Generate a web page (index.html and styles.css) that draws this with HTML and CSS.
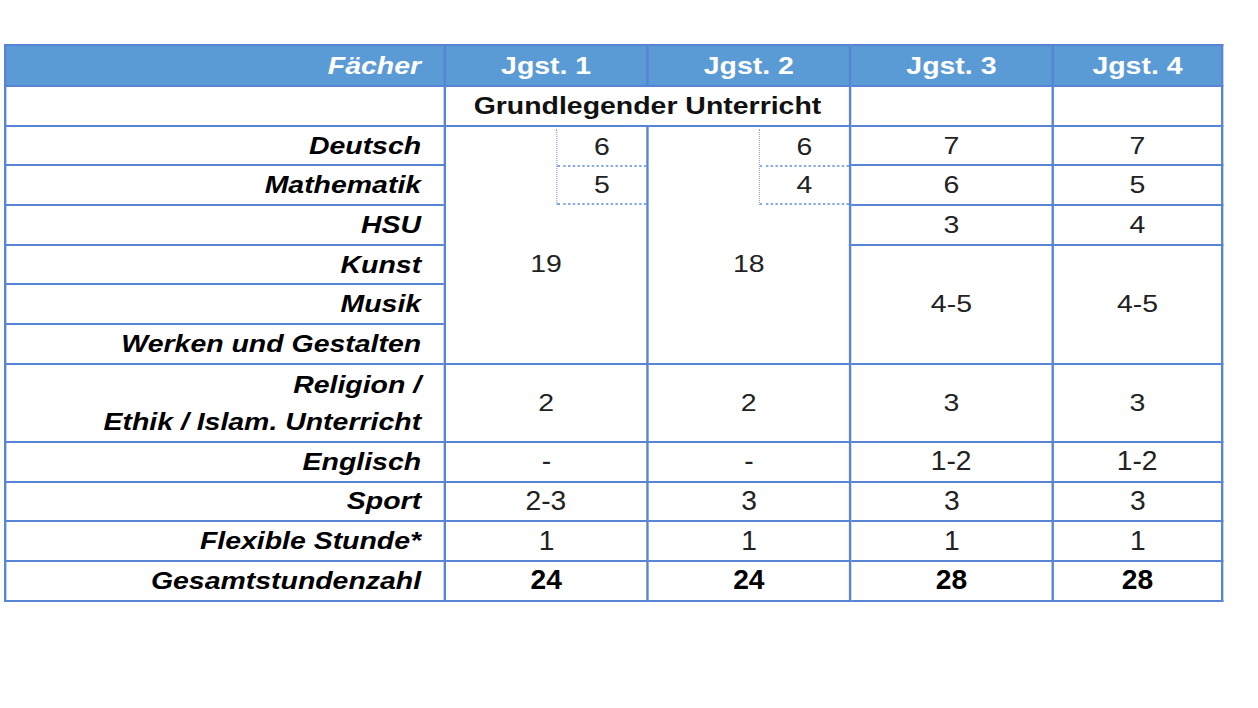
FILE: index.html
```html
<!DOCTYPE html>
<html lang="de">
<head>
<meta charset="utf-8">
<title>Stundentafel Grundschule</title>
<link rel="stylesheet" href="styles.css">
</head>
<body>
<div class="sheet">
<table class="plan">
  <colgroup>
    <col class="c-subj"><col class="c-y"><col class="c-y"><col class="c-y"><col class="c-y4">
  </colgroup>
  <thead>
    <tr class="head">
      <th class="subj">Fächer</th>
      <th>Jgst. 1</th>
      <th>Jgst. 2</th>
      <th>Jgst. 3</th>
      <th>Jgst. 4</th>
    </tr>
  </thead>
  <tbody>
    <tr>
      <td class="subj"></td>
      <td colspan="2" class="group">Grundlegender Unterricht</td>
      <td></td>
      <td></td>
    </tr>
    <tr>
      <td class="subj">Deutsch</td>
      <td rowspan="6" class="block">
        <div class="split">
          <div class="split-row">6</div>
          <div class="split-row">5</div>
        </div>
        <div class="big">19</div>
      </td>
      <td rowspan="6" class="block">
        <div class="split">
          <div class="split-row">6</div>
          <div class="split-row">4</div>
        </div>
        <div class="big">18</div>
      </td>
      <td class="num">7</td>
      <td class="num">7</td>
    </tr>
    <tr>
      <td class="subj">Mathematik</td>
      <td class="num">6</td>
      <td class="num">5</td>
    </tr>
    <tr>
      <td class="subj">HSU</td>
      <td class="num">3</td>
      <td class="num">4</td>
    </tr>
    <tr>
      <td class="subj">Kunst</td>
      <td rowspan="3" class="num">4-5</td>
      <td rowspan="3" class="num">4-5</td>
    </tr>
    <tr>
      <td class="subj">Musik</td>
    </tr>
    <tr>
      <td class="subj">Werken und Gestalten</td>
    </tr>
    <tr class="tall">
      <td class="subj two">Religion /<br>Ethik / Islam. Unterricht</td>
      <td class="num">2</td>
      <td class="num">2</td>
      <td class="num">3</td>
      <td class="num">3</td>
    </tr>
    <tr>
      <td class="subj">Englisch</td>
      <td class="num"><span class="nw">-</span></td>
      <td class="num"><span class="nw">-</span></td>
      <td class="num"><span class="nw">1-2</span></td>
      <td class="num"><span class="nw">1-2</span></td>
    </tr>
    <tr>
      <td class="subj">Sport</td>
      <td class="num"><span class="nw">2-3</span></td>
      <td class="num"><span class="nw">3</span></td>
      <td class="num"><span class="nw">3</span></td>
      <td class="num"><span class="nw">3</span></td>
    </tr>
    <tr>
      <td class="subj">Flexible Stunde*</td>
      <td class="num"><span class="nw">1</span></td>
      <td class="num"><span class="nw">1</span></td>
      <td class="num"><span class="nw">1</span></td>
      <td class="num"><span class="nw">1</span></td>
    </tr>
    <tr>
      <td class="subj">Gesamtstundenzahl</td>
      <td class="num total"><span class="nw">24</span></td>
      <td class="num total"><span class="nw">24</span></td>
      <td class="num total"><span class="nw">28</span></td>
      <td class="num total"><span class="nw">28</span></td>
    </tr>
  </tbody>
</table>
</div>
</body>
</html>
```
FILE: styles.css
```css
html, body {
  margin: 0;
  padding: 0;
  background: #ffffff;
}

body {
  font-family: "Liberation Sans", Arial, sans-serif;
  color: #111;
}

/* The sheet is shown horizontally stretched, like the original export */
.sheet {
  width: 1029px;
  margin: 44px 0 0 4px;
  transform: scaleX(1.185);
  transform-origin: 0 0;
}

.plan {
  width: 1029px;
  table-layout: fixed;
  border-collapse: collapse;
  font-size: 24px;
}

.c-subj { width: 371px; }
.c-y { width: 171px; }
.c-y4 { width: 143px; }

.plan th,
.plan td {
  border: 2px solid #5884d6;
  padding: 0;
  height: 37.7px;
  line-height: 36px;
  vertical-align: middle;
}

.head th {
  background: #5b9bd5;
  color: #ffffff;
  font-weight: bold;
  text-align: center;
  height: 39px;
}

.head th.subj {
  font-style: italic;
  text-align: right;
}

.subj {
  text-align: right;
  padding-right: 19px !important;
  font-weight: bold;
  font-style: italic;
  color: #000;
}

.two {
  line-height: 37px !important;
}

.tall td {
  height: 76px;
}

.group {
  text-align: center;
  font-weight: bold;
  color: #111;
}

.num {
  text-align: center;
  color: #222;
}

/* Arial-Narrow look for the lower figures */
.nw {
  display: inline-block;
  font-size: 28px;
  line-height: 36px;
  transform: scaleX(0.85);
}

.total {
  font-weight: bold;
  color: #000;
}

.block {
  vertical-align: top !important;
}

.split {
  margin-left: auto;
  width: 75px;
  border-left: 1.5px dotted #86a9e4;
  margin-top: 2px;
}

.split-row {
  height: 36px;
  line-height: 36px;
  text-align: center;
  color: #222;
  border-bottom: 2px dotted #86a9e4;
}

.big {
  margin-top: 41px;
  line-height: 36px;
  text-align: center;
  color: #222;
}
```
